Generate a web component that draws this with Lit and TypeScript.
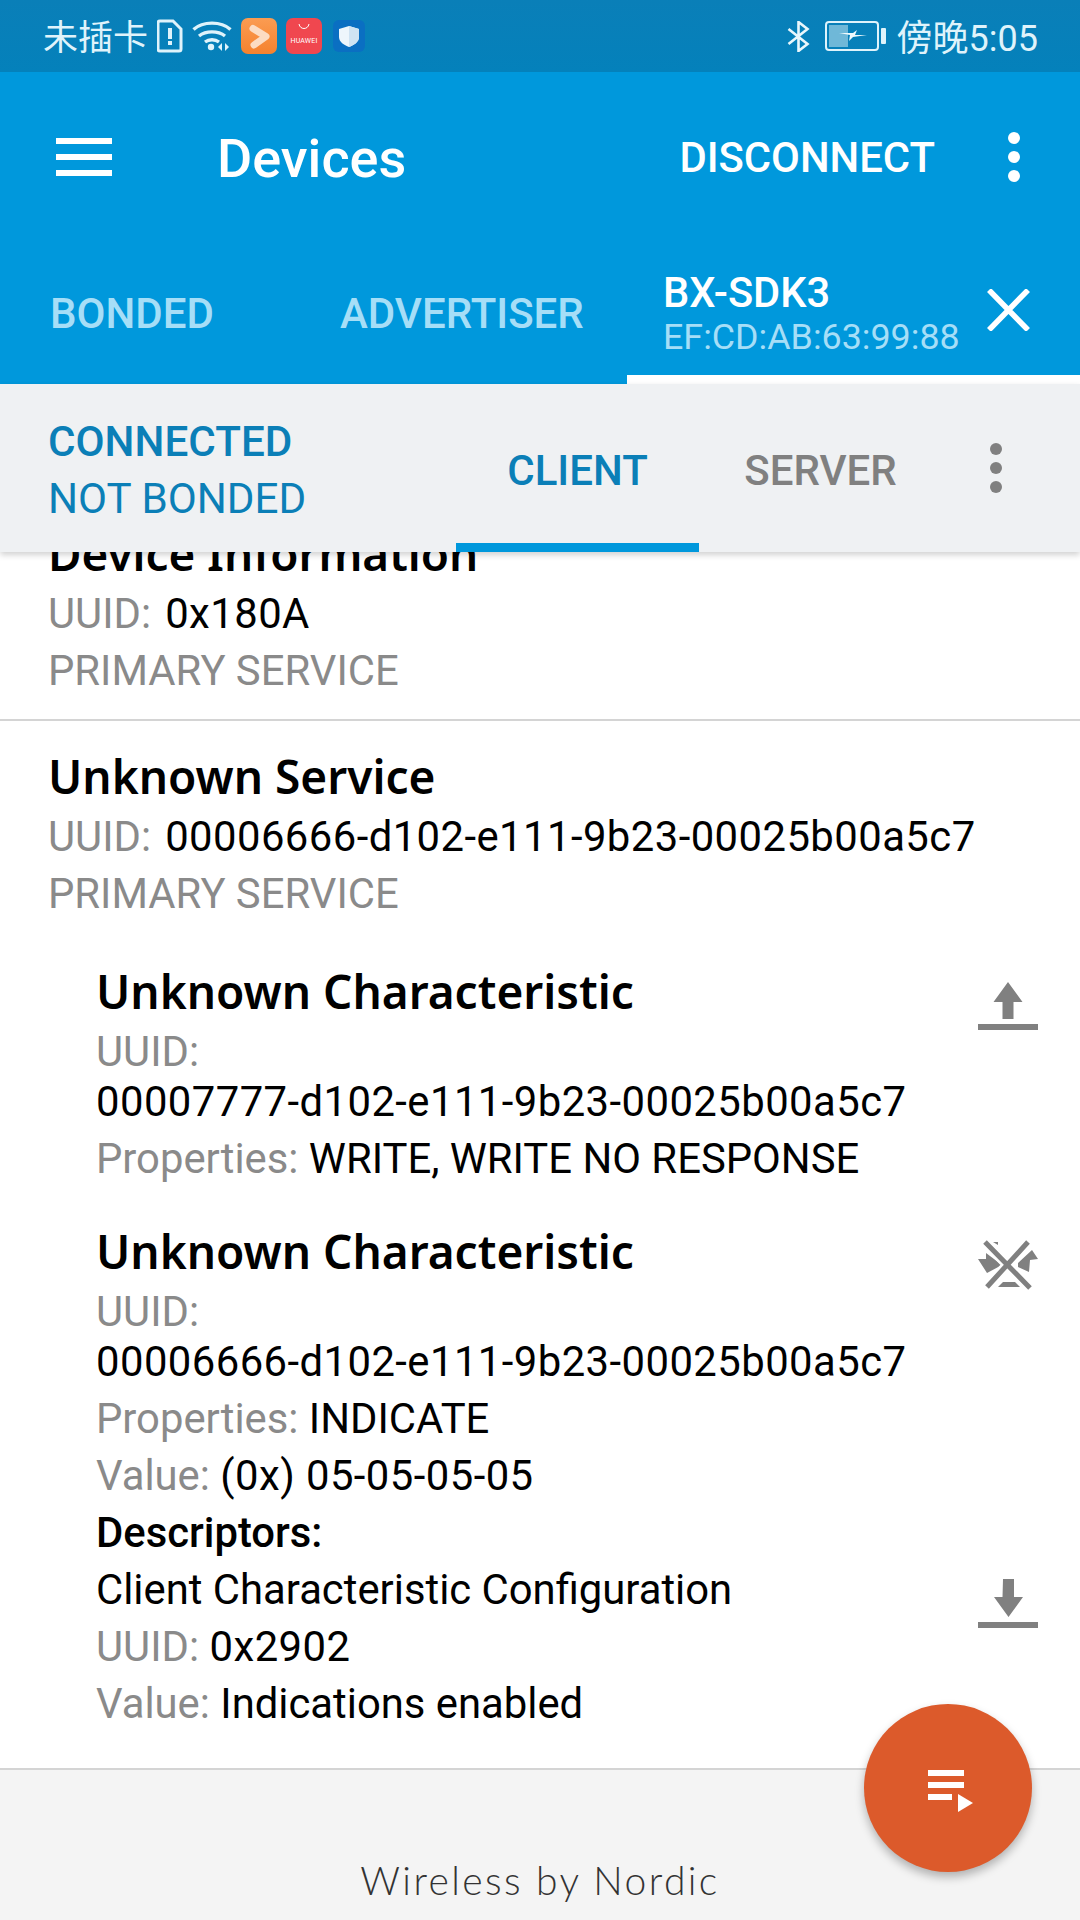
import { LitElement, html, css } from "lit";
import { customElement } from "lit/decorators.js";

@customElement("app-root")
export class AppRoot extends LitElement {
  static styles = css`
    :host { display: block; width: 1080px; height: 1920px; position: relative; overflow: hidden; background: #fff; font-family: Roboto, sans-serif; }
    svg { display: block; flex: none; }
    .status { height: 72px; background: linear-gradient(#0a7fb8, #0481bb); display: flex; align-items: center; color: #dff3fb; padding: 0 42px 0 43px; font-size: 36px; font-family: Roboto, "Noto Sans CJK SC", sans-serif; }
    .cjk { font-family: "Noto Sans CJK SC", sans-serif; font-size: 35px; margin: 0 9px 3px 0; }
    .sicons { display: flex; align-items: center; gap: 9px; }
    .spacer { flex: 1; }
    .time { margin: 0 0 2px 11px; font-size: 36px; }
    .app { background: #0098dc; height: 312px; color: #fff; display: flex; flex-direction: column; }
    .toolbar { height: 170px; display: flex; align-items: center; padding: 0 0 0 56px; flex: none; }
    .title { font-size: 54px; font-weight: 500; margin-left: 105px; margin-top: 3px; }
    .disc { font-size: 41.8px; font-weight: 500; margin-left: auto; margin-right: 72px; }
    .tabs { flex: 1; display: flex; align-items: stretch; }
    .tab { font-size: 42px; font-weight: 500; color: #a6def7; padding-top: 21px; display: flex; align-items: center; height: 100px; box-sizing: content-box; }
    .tab.b { margin-left: 50px; width: 290px; }
    .tab.a { width: 287px; }
    .tab.dev { width: 453px; box-sizing: border-box; height: 142px; padding: 10px 0 0 36px; border-bottom: 9px solid #fff; justify-content: space-between; }
    .devname { font-size: 41.6px; font-weight: 500; color: #fff; line-height: 46px; }
    .devaddr { font-size: 35.8px; font-weight: 400; color: #a6def7; line-height: 42px; }
    .close { margin-right: 50px; margin-bottom: 8px; }
    .sub { height: 168px; background: #eff1f3; display: flex; align-items: stretch; position: relative; z-index: 2; box-shadow: 0 3px 6px rgba(0,0,0,.18); }
    .state { width: 456px; box-sizing: border-box; padding: 29px 0 0 48px; color: #0b7fb7; font-size: 42.2px; line-height: 57px; }
    .state b { font-weight: 500; display: block; }
    .state span { display: block; }
    .stab { font-size: 42px; font-weight: 500; display: flex; align-items: center; justify-content: center; height: 159px; box-sizing: border-box; }
    .stab span { position: relative; top: 7px; }
    .stab.on { width: 243px; color: #0b7fb7; border-bottom: 9px solid #0098dc; height: 168px; }
    .stab.off { width: 243px; color: #808080; }
    .subdots { margin-left: 47px; align-self: center; }
    .list { height: 1216px; overflow: hidden; color: #000; font-size: 41.8px; line-height: 50px; }
    .h { font-family: "Noto Sans", sans-serif; font-weight: 600; font-size: 46px; line-height: 60px; margin-bottom: 6px; }
    .h.dev { font-size: 45.8px; }
    .g { color: #8a8a8a; }
    .lbl { margin-right: 14px; }
    .hex { letter-spacing: .45px; }
    .service { padding-left: 48px; }
    .first { margin-top: -29px; padding-bottom: 23px; border-bottom: 2px solid #d4d4d4; }
    .second { padding-top: 25px; }
    .row { white-space: nowrap; margin-top: 7px; }
    .row.wrap { margin-top: 0; }
    .ch { padding-left: 48px; position: relative; padding-right: 42px; }
    .ch.c1 { margin-top: 42px; }
    .ch.c2 { margin-top: 37px; }
    .ch svg { position: absolute; }
    .bold { font-weight: 500; }
    .footer { height: 152px; background: #f4f4f4; border-top: 2px solid #d4d4d4; box-sizing: border-box; display: flex; justify-content: center; padding-top: 87px; font-family: Lato, sans-serif; font-weight: 300; font-size: 39px; letter-spacing: 2.4px; color: #333; }
    .fab { position: absolute; left: 864px; top: 1704px; width: 168px; height: 168px; border-radius: 50%; background: #dc5a2b; box-shadow: 0 5px 10px rgba(0,0,0,.28); display: flex; align-items: center; justify-content: center; }
    .fab svg { margin: 6px 0 0 5px; }
    .hw { width: 36px; height: 36px; border-radius: 7px; background: #f0474f; display: flex; flex-direction: column; align-items: center; color: #fff; line-height: 8px; }
    .hw svg { margin: 5px 0; }
    .hw span { font-size: 7px; letter-spacing: .2px; }
  `;

  render() {
    return html`
      <div class="status">
        <span class="cjk">未插卡</span>
        <div class="sicons">
          <svg width="26" height="34" viewBox="0 0 26 34"><path d="M3 2h13l8 8v20a2 2 0 0 1-2 2H3a2 2 0 0 1-2-2V4a2 2 0 0 1 2-2z" fill="none" stroke="#dff3fb" stroke-width="3"/><rect x="11" y="9" width="4" height="11" fill="#dff3fb"/><rect x="11" y="22" width="4" height="4" fill="#dff3fb"/></svg>
          <svg width="40" height="34" viewBox="0 0 40 34" fill="none" stroke="#dff3fb" stroke-width="3.4"><path d="M1.5 10.5C11 2 29 2 38.5 10.5"/><path d="M7 17c7-5.500 19-5.500 26 0"/><path d="M13 23c4-3 10-3 14 0"/><circle cx="19" cy="28" r="3.200" fill="#dff3fb" stroke="none"/><path d="M30 24v8l-4-4zM33 24v8l4-4z" fill="#dff3fb" stroke="none"/></svg>
          <svg width="36" height="36" viewBox="0 0 36 36"><defs><linearGradient id="o" x1="0" y1="0" x2="0" y2="1"><stop offset="0" stop-color="#fb9c52"/><stop offset="1" stop-color="#f5822e"/></linearGradient></defs><rect width="36" height="36" rx="7" fill="url(#o)"/><path d="M12 10.500L25 18.500 13 27" fill="none" stroke="#fcdcc2" stroke-width="7" stroke-linejoin="round" stroke-linecap="round"/></svg>
          <div class="hw"><svg width="14" height="9" viewBox="0 0 14 9"><path d="M2 1c1 6 9 6 10 0" fill="none" stroke="#fff" stroke-width="1"/></svg><span>HUAWEI</span></div>
          <svg width="32" height="32" viewBox="0 0 32 32" style="margin-left:2px"><rect width="32" height="32" rx="6" fill="#0a6fc2"/><path d="M16 6l10 3v8c0 5-5 8-10 10-5-2-10-5-10-10V9z" fill="#eef6fc"/><path d="M16 6l10 3v8c0 5-5 8-10 10z" fill="#cfe3f3"/></svg>
        </div>
        <div class="spacer"></div>
        <svg width="23" height="31" viewBox="0 0 23 31" fill="none" stroke="#eaf7fc" stroke-width="2.600"><path d="M1.500 8l19 15-9 7V1l9 7-19 15"/></svg>
        <svg width="61" height="30" viewBox="0 0 61 30" style="margin-left:15px"><rect x="1" y="1" width="52" height="28" rx="3" fill="none" stroke="#dff3fb" stroke-width="2"/><rect x="4" y="4" width="19" height="22" fill="#6fb8d8"/><path d="M14 12h14l4-3-2 5h12l-14 2-4 4 1-6z" fill="#f0fafd"/><rect x="56" y="7" width="5" height="16" rx="1" fill="#dff3fb"/></svg>
        <span class="time">傍晚5:05</span>
      </div>
      <div class="app">
        <div class="toolbar">
          <svg width="56" height="38" viewBox="0 0 56 38" fill="#fff"><rect width="56" height="6"/><rect y="16" width="56" height="6"/><rect y="32" width="56" height="6"/></svg>
          <span class="title">Devices</span>
          <span class="disc">DISCONNECT</span>
          <svg width="14" height="50" viewBox="0 0 14 50" fill="#fff" style="margin-right:59px"><circle cx="7" cy="6" r="6"/><circle cx="7" cy="25" r="6"/><circle cx="7" cy="44" r="6"/></svg>
        </div>
        <div class="tabs">
          <div class="tab b">BONDED</div>
          <div class="tab a">ADVERTISER</div>
          <div class="tab dev">
            <div><div class="devname">BX-SDK3</div><div class="devaddr">EF:CD:AB:63:99:88</div></div>
            <svg class="close" width="43" height="42" viewBox="0 0 43 42" stroke="#fff" stroke-width="5.500"><path d="M2 1l39 40M41 1L2 41"/></svg>
          </div>
        </div>
      </div>
      <div class="sub">
        <div class="state"><b>CONNECTED</b><span>NOT BONDED</span></div>
        <div class="stab on"><span>CLIENT</span></div>
        <div class="stab off"><span>SERVER</span></div>
        <svg class="subdots" width="14" height="50" viewBox="0 0 14 50" fill="#808080"><circle cx="7" cy="6" r="6"/><circle cx="7" cy="25" r="6"/><circle cx="7" cy="44" r="6"/></svg>
      </div>
      <div class="list">
        <div class="service first">
          <div class="h dev">Device Information</div>
          <div class="row wrap"><span class="g lbl">UUID:</span><span class="hex">0x180A</span></div>
          <div class="row g">PRIMARY SERVICE</div>
        </div>
        <div class="service second">
          <div class="h">Unknown Service</div>
          <div class="row wrap"><span class="g lbl">UUID:</span><span class="hex">00006666-d102-e111-9b23-00025b00a5c7</span></div>
          <div class="row g">PRIMARY SERVICE</div>
          <div class="ch c1">
            <div class="h">Unknown Characteristic</div>
            <div class="row wrap g">UUID:</div>
            <div class="row wrap hex">00007777-d102-e111-9b23-00025b00a5c7</div>
            <div class="row"><span class="g">Properties:</span> WRITE, WRITE NO RESPONSE</div>
            <svg style="left:930px;top:21px" width="60" height="48" viewBox="0 0 60 48" fill="#808080"><path d="M30 0l14.500 20H35.500v17h-11V20h-9z"/><rect y="42" width="60" height="6"/></svg>
          </div>
          <div class="ch c2">
            <div class="h">Unknown Characteristic</div>
            <div class="row wrap g">UUID:</div>
            <div class="row wrap hex">00006666-d102-e111-9b23-00025b00a5c7</div>
            <div class="row"><span class="g">Properties:</span> INDICATE</div>
            <div class="row"><span class="g">Value:</span> <span class="hex">(0x) 05-05-05-05</span></div>
            <div class="row bold">Descriptors:</div>
            <div class="row">Client Characteristic Configuration</div>
            <div class="row"><span class="g">UUID:</span> <span class="hex">0x2902</span></div>
            <div class="row"><span class="g">Value:</span> Indications enabled</div>
            <svg style="left:930px;top:17px" width="60" height="54" viewBox="0 0 60 54"><g fill="#808080"><path d="M0 21h8v-6l16 12-15 8z"/><path d="M15 4h5v3z"/><path d="M40 25l14-13 6 9-8 1-1 12-11-5z"/><path d="M20 49h22l-5-5H25z"/></g><path d="M7 4l45 46M50 4L9 49" stroke="#fff" stroke-width="10" fill="none"/><path d="M7 4l45 46M50 4L9 49" stroke="#808080" stroke-width="5" fill="none"/></svg>
            <svg style="left:930px;top:358px" width="60" height="49" viewBox="0 0 60 49" fill="#808080"><path d="M25 0h11v18h9l-14.500 20-14.500-20h8.500z"/><rect y="43" width="60" height="6"/></svg>
          </div>
        </div>
      </div>
      <div class="footer">Wireless by Nordic</div>
      <div class="fab">
        <svg width="45" height="42" viewBox="0 0 45 42" fill="#fff"><rect width="36" height="6"/><rect y="12" width="36" height="6"/><rect y="24" width="24" height="6"/><path d="M30 24l15 9-15 9z"/></svg>
      </div>
    `;
  }
}
